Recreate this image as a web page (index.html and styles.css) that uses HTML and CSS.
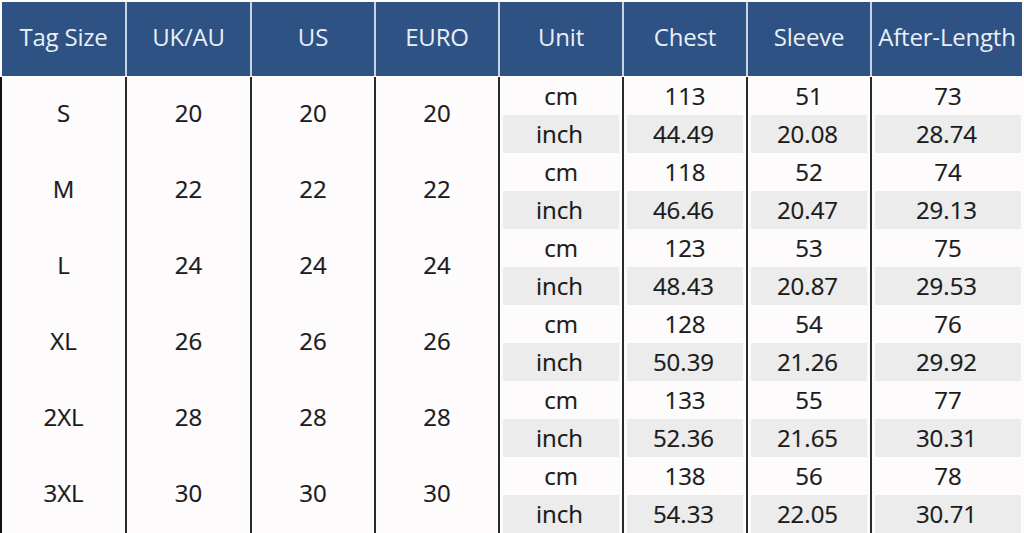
FILE: index.html
```html
<!DOCTYPE html>
<html>
<head>
<meta charset="utf-8">
<link rel="stylesheet" href="styles.css">
</head>
<body>
<div class="chart">
  <div class="head">
    <div class="hc">Tag Size</div>
    <div class="hc">UK/AU</div>
    <div class="hc">US</div>
    <div class="hc">EURO</div>
    <div class="hc">Unit</div>
    <div class="hc">Chest</div>
    <div class="hc">Sleeve</div>
    <div class="hc">After-Length</div>
  </div>
  <div class="body">
    <div class="m first">S</div><div class="m">20</div><div class="m">20</div><div class="m">20</div>
    <div class="c">cm</div><div class="c">113</div><div class="c">51</div><div class="c">73</div>
    <div class="c g">inch</div><div class="c g">44.49</div><div class="c g">20.08</div><div class="c g">28.74</div>

    <div class="m first">M</div><div class="m">22</div><div class="m">22</div><div class="m">22</div>
    <div class="c">cm</div><div class="c">118</div><div class="c">52</div><div class="c">74</div>
    <div class="c g">inch</div><div class="c g">46.46</div><div class="c g">20.47</div><div class="c g">29.13</div>

    <div class="m first">L</div><div class="m">24</div><div class="m">24</div><div class="m">24</div>
    <div class="c">cm</div><div class="c">123</div><div class="c">53</div><div class="c">75</div>
    <div class="c g">inch</div><div class="c g">48.43</div><div class="c g">20.87</div><div class="c g">29.53</div>

    <div class="m first">XL</div><div class="m">26</div><div class="m">26</div><div class="m">26</div>
    <div class="c">cm</div><div class="c">128</div><div class="c">54</div><div class="c">76</div>
    <div class="c g">inch</div><div class="c g">50.39</div><div class="c g">21.26</div><div class="c g">29.92</div>

    <div class="m first">2XL</div><div class="m">28</div><div class="m">28</div><div class="m">28</div>
    <div class="c">cm</div><div class="c">133</div><div class="c">55</div><div class="c">77</div>
    <div class="c g">inch</div><div class="c g">52.36</div><div class="c g">21.65</div><div class="c g">30.31</div>

    <div class="m first">3XL</div><div class="m">30</div><div class="m">30</div><div class="m">30</div>
    <div class="c">cm</div><div class="c">138</div><div class="c">56</div><div class="c">78</div>
    <div class="c g">inch</div><div class="c g">54.33</div><div class="c g">22.05</div><div class="c g">30.71</div>
  </div>
</div>
</body>
</html>
```
FILE: styles.css
```css
html, body {
  margin: 0;
  padding: 0;
  background: #fdfbfb;
}
.chart {
  width: 1024px;
  height: 533px;
  overflow: hidden;
  font-family: "Open Sans", "Noto Sans", sans-serif;
  font-size: 24px;
}
.head {
  display: grid;
  grid-template-columns: 123px 123px 122px 122px 122px 122px 122px 150px;
  column-gap: 2px;
  margin: 2px 2px 1px 2px;
  height: 74px;
  background: #c7d3e3;
}
.hc {
  background: #2e5283;
  color: #e9eff6;
  display: flex;
  align-items: center;
  justify-content: center;
  white-space: nowrap;
  letter-spacing: -0.2px;
  padding-bottom: 5px;
}
.body {
  display: grid;
  grid-template-columns: 125px 125px 124px 124px 124px 124px 124px 1fr;
  grid-auto-rows: 38px;
  color: #1a1a1a;
}
.m, .c {
  display: flex;
  align-items: center;
  justify-content: center;
  border-left: 2px solid #2a2a2a;
  -webkit-text-stroke: 0.2px #1a1a1a;
}
.m {
  grid-row: span 2;
  padding-bottom: 5px;
}
.m.first {
  border-left-color: #111;
}
.c {
  padding: 0 3px 2px 3px;
  background-clip: content-box;
}
.c.g {
  background-color: #ececec;
  background-clip: padding-box;
  border-right: 3px solid #fdfbfb;
  padding: 0 0 2px 0;
  box-shadow: inset 3px 0 0 #fdfbfb;
}
```
